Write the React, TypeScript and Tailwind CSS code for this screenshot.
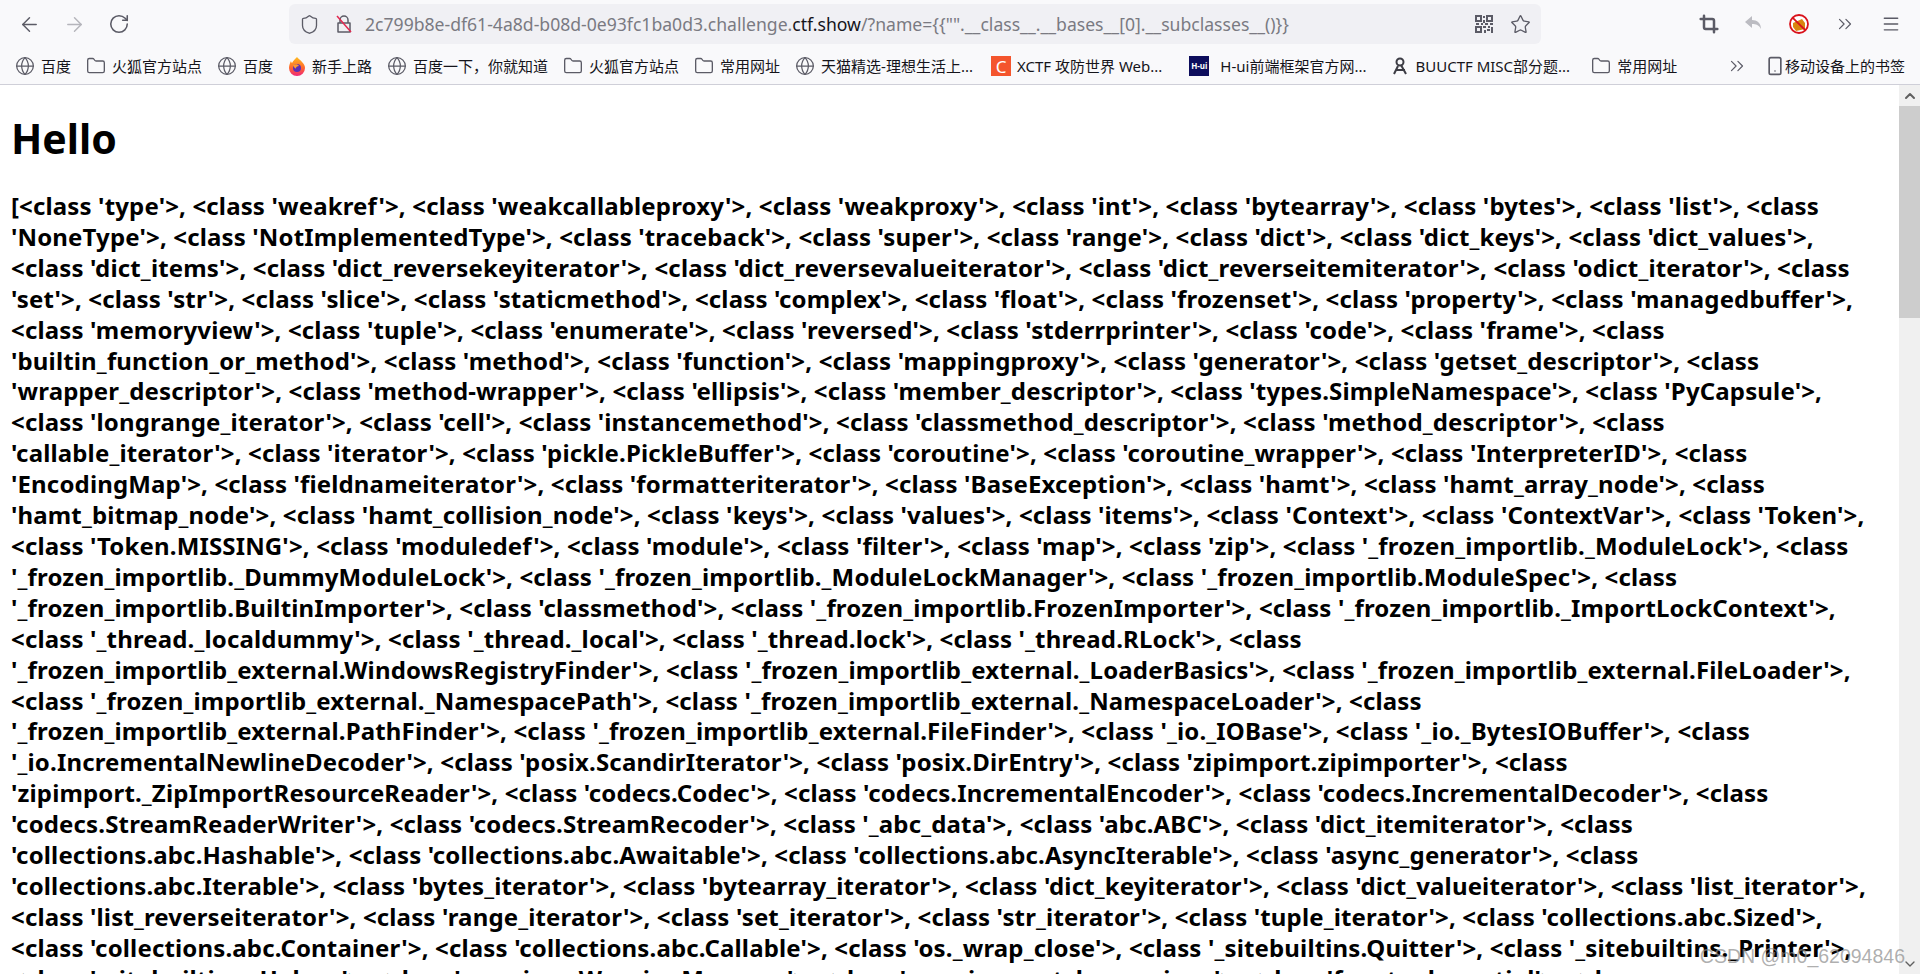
import { ArrowLeft, ArrowRight, RotateCw, Shield, Star, Globe, Folder, ChevronsRight, Menu, Crop, Smartphone, ChevronUp, ChevronDown } from "lucide-react";

const lines = [
  "[<class 'type'>, <class 'weakref'>, <class 'weakcallableproxy'>, <class 'weakproxy'>, <class 'int'>, <class 'bytearray'>, <class 'bytes'>, <class 'list'>, <class",
  "'NoneType'>, <class 'NotImplementedType'>, <class 'traceback'>, <class 'super'>, <class 'range'>, <class 'dict'>, <class 'dict_keys'>, <class 'dict_values'>,",
  "<class 'dict_items'>, <class 'dict_reversekeyiterator'>, <class 'dict_reversevalueiterator'>, <class 'dict_reverseitemiterator'>, <class 'odict_iterator'>, <class",
  "'set'>, <class 'str'>, <class 'slice'>, <class 'staticmethod'>, <class 'complex'>, <class 'float'>, <class 'frozenset'>, <class 'property'>, <class 'managedbuffer'>,",
  "<class 'memoryview'>, <class 'tuple'>, <class 'enumerate'>, <class 'reversed'>, <class 'stderrprinter'>, <class 'code'>, <class 'frame'>, <class",
  "'builtin_function_or_method'>, <class 'method'>, <class 'function'>, <class 'mappingproxy'>, <class 'generator'>, <class 'getset_descriptor'>, <class",
  "'wrapper_descriptor'>, <class 'method-wrapper'>, <class 'ellipsis'>, <class 'member_descriptor'>, <class 'types.SimpleNamespace'>, <class 'PyCapsule'>,",
  "<class 'longrange_iterator'>, <class 'cell'>, <class 'instancemethod'>, <class 'classmethod_descriptor'>, <class 'method_descriptor'>, <class",
  "'callable_iterator'>, <class 'iterator'>, <class 'pickle.PickleBuffer'>, <class 'coroutine'>, <class 'coroutine_wrapper'>, <class 'InterpreterID'>, <class",
  "'EncodingMap'>, <class 'fieldnameiterator'>, <class 'formatteriterator'>, <class 'BaseException'>, <class 'hamt'>, <class 'hamt_array_node'>, <class",
  "'hamt_bitmap_node'>, <class 'hamt_collision_node'>, <class 'keys'>, <class 'values'>, <class 'items'>, <class 'Context'>, <class 'ContextVar'>, <class 'Token'>,",
  "<class 'Token.MISSING'>, <class 'moduledef'>, <class 'module'>, <class 'filter'>, <class 'map'>, <class 'zip'>, <class '_frozen_importlib._ModuleLock'>, <class",
  "'_frozen_importlib._DummyModuleLock'>, <class '_frozen_importlib._ModuleLockManager'>, <class '_frozen_importlib.ModuleSpec'>, <class",
  "'_frozen_importlib.BuiltinImporter'>, <class 'classmethod'>, <class '_frozen_importlib.FrozenImporter'>, <class '_frozen_importlib._ImportLockContext'>,",
  "<class '_thread._localdummy'>, <class '_thread._local'>, <class '_thread.lock'>, <class '_thread.RLock'>, <class",
  "'_frozen_importlib_external.WindowsRegistryFinder'>, <class '_frozen_importlib_external._LoaderBasics'>, <class '_frozen_importlib_external.FileLoader'>,",
  "<class '_frozen_importlib_external._NamespacePath'>, <class '_frozen_importlib_external._NamespaceLoader'>, <class",
  "'_frozen_importlib_external.PathFinder'>, <class '_frozen_importlib_external.FileFinder'>, <class '_io._IOBase'>, <class '_io._BytesIOBuffer'>, <class",
  "'_io.IncrementalNewlineDecoder'>, <class 'posix.ScandirIterator'>, <class 'posix.DirEntry'>, <class 'zipimport.zipimporter'>, <class",
  "'zipimport._ZipImportResourceReader'>, <class 'codecs.Codec'>, <class 'codecs.IncrementalEncoder'>, <class 'codecs.IncrementalDecoder'>, <class",
  "'codecs.StreamReaderWriter'>, <class 'codecs.StreamRecoder'>, <class '_abc_data'>, <class 'abc.ABC'>, <class 'dict_itemiterator'>, <class",
  "'collections.abc.Hashable'>, <class 'collections.abc.Awaitable'>, <class 'collections.abc.AsyncIterable'>, <class 'async_generator'>, <class",
  "'collections.abc.Iterable'>, <class 'bytes_iterator'>, <class 'bytearray_iterator'>, <class 'dict_keyiterator'>, <class 'dict_valueiterator'>, <class 'list_iterator'>,",
  "<class 'list_reverseiterator'>, <class 'range_iterator'>, <class 'set_iterator'>, <class 'str_iterator'>, <class 'tuple_iterator'>, <class 'collections.abc.Sized'>,",
  "<class 'collections.abc.Container'>, <class 'collections.abc.Callable'>, <class 'os._wrap_close'>, <class '_sitebuiltins.Quitter'>, <class '_sitebuiltins._Printer'>,",
  "<class '_sitebuiltins._Helper'>, <class 'warnings.WarningMessage'>, <class 'warnings.catch_warnings'>, <class 'functools.partial'>, <class",
];

const bookmarks = [
  { icon: "globe", label: "百度", cls: "gap-[6px]" },
  { icon: "folder", label: "火狐官方站点", cls: "gap-[6px]" },
  { icon: "globe", label: "百度", cls: "gap-[6px]" },
  { icon: "firefox", label: "新手上路", cls: "gap-[6px]" },
  { icon: "globe", label: "百度一下，你就知道", cls: "gap-[6px]" },
  { icon: "folder", label: "火狐官方站点", cls: "gap-[6px]" },
  { icon: "folder", label: "常用网址", cls: "gap-[6px]" },
  { icon: "globe", label: "天猫精选-理想生活上...", cls: "gap-[6px]" },
  { icon: "xctf", label: "XCTF 攻防世界 Web...", cls: "ml-[3px] gap-[6px]" },
  { icon: "hui", label: "H-ui前端框架官方网...", cls: "ml-[12px] gap-[11px]" },
  { icon: "buu", label: "BUUCTF MISC部分题...", cls: "ml-[10px] gap-[6px]" },
  { icon: "folder", label: "常用网址", cls: "ml-[6px] gap-[6px]" },
];

function FirefoxIcon() {
  return (
    <svg width="18" height="20" viewBox="0 0 18 20">
      <defs>
        <linearGradient id="fx" x1="0" y1="0" x2="0" y2="1">
          <stop offset="0" stopColor="#ffbd1f" />
          <stop offset="0.55" stopColor="#ff6a2b" />
          <stop offset="1" stopColor="#f0257a" />
        </linearGradient>
      </defs>
      <path d="M9 1c1 2 4 3 5 5 2 2 3 4 3 6a8 8 0 0 1-16 0c0-3 1-5 2-7 0 1 1 2 1 2 1-2 3-4 5-6z" fill="url(#fx)" />
      <circle cx="9" cy="12" r="4" fill="#5b2fb4" />
      <path d="M5 9c2-1 5-1 6 1-2 0-3 1-3 2s-2 0-3-3z" fill="#ff9b2d" />
    </svg>
  );
}

function BuuIcon() {
  return (
    <svg width="18" height="20" viewBox="0 0 18 20" fill="none" stroke="#3c3c44" strokeWidth="2">
      <circle cx="9" cy="6" r="3.5" />
      <path d="M7 10 3 18M10 9l5 9M5 14h9" />
    </svg>
  );
}

function BookmarkIcon({ icon }: { icon: string }) {
  if (icon === "globe") return <Globe size={20} strokeWidth={1.5} className="text-[#5b5b66]" />;
  if (icon === "folder") return <Folder size={20} strokeWidth={1.6} className="text-[#5b5b66]" />;
  if (icon === "firefox") return <FirefoxIcon />;
  if (icon === "buu") return <BuuIcon />;
  if (icon === "xctf")
    return <span className="flex h-5 w-5 items-center justify-center bg-[#f4552d] text-[17px] leading-none text-white">C</span>;
  return <span className="flex h-5 w-5 items-center justify-center bg-[#0d0d5c] text-[8px] font-bold leading-none text-white">H-ui</span>;
}

function BlockedAddon() {
  return (
    <svg width="20" height="20" viewBox="0 0 20 20">
      <circle cx="10" cy="10" r="9" fill="#fff" />
      <path d="M4 9l9-4 3 4v6l-9 2-3-4z" fill="#d9860f" />
      <circle cx="10" cy="10" r="9" fill="none" stroke="#d9121b" strokeWidth="1.8" />
      <path d="M3.8 3.8 16.2 16.2" stroke="#d9121b" strokeWidth="1.8" />
    </svg>
  );
}

function BrokenLock() {
  return (
    <svg width="18" height="20" viewBox="0 0 18 20" fill="none">
      <path d="M5 9V6a4 4 0 0 1 8 0v3M3 9h12v9H3z" stroke="#5b5b66" strokeWidth="1.5" strokeLinejoin="round" />
      <path d="M2 2l14 16" stroke="#e22850" strokeWidth="1.5" />
    </svg>
  );
}

function QrIcon() {
  return (
    <svg width="18" height="18" viewBox="0 0 18 18" fill="#5b5b66">
      <path d="M0 0h7v7H0zM2 2v3h3V2zM11 0h7v7h-7zM13 2v3h3V2zM0 11h7v7H0zM2 13v3h3v-3z" fillRule="evenodd" />
      <path d="M8 1h2v2H8zM8 5h2v3H8zM1 8h3v2H1zM6 8h2v2H6zM10 8h3v2h-3zM15 8h3v2h-3zM8 11h3v2H8zM13 11h2v2h-2zM9 15h2v3H9zM12 14h3v2h-3zM16 12h2v6h-2z" />
    </svg>
  );
}

export default function App() {
  return (
    <div className="flex h-screen w-full flex-col overflow-hidden bg-white font-['Noto_Sans','Noto_Sans_CJK_SC',sans-serif]">
      <div className="h-[85px] shrink-0 border-b border-[#cfcfd8] bg-[#f9f9fb]">
        <div className="flex h-12 items-start">
          <div className="flex h-12 w-[289px] items-center gap-[22px] pl-[18px] text-[#5b5b66]">
            <ArrowLeft size={23} strokeWidth={1.5} />
            <ArrowRight size={23} strokeWidth={1.5} className="text-[#b5b5bb]" />
            <RotateCw size={22} strokeWidth={1.7} />
          </div>
          <div className="mt-1 flex h-10 w-[1252px] items-center rounded-md bg-[#f0f0f4] pl-[10px] pr-[10px]">
            <Shield size={21} strokeWidth={1.5} className="text-[#5b5b66]" />
            <span className="ml-[15px]"><BrokenLock /></span>
            <span className="ml-[12px] whitespace-nowrap text-[17.6px] text-[#7a7a82]">
              2c799b8e-df61-4a8d-b08d-0e93fc1ba0d3.challenge.<span className="text-[#15141a]">ctf.show</span>/?name={"{{\"\".__class__.__bases__[0].__subclasses__()}}"}
            </span>
            <div className="ml-auto flex items-center gap-[17px]">
              <QrIcon />
              <Star size={21} strokeWidth={1.5} className="text-[#5b5b66]" />
            </div>
          </div>
          <div className="flex h-12 flex-1 items-center justify-end gap-[25px] pr-[19px] text-[#5b5b66]">
            <Crop size={20} strokeWidth={3} />
            <svg width="20" height="18" viewBox="0 0 20 18" fill="#bcbcc2">
              <path d="M8 1 1 7l7 6V9c4 0 7 1 9 5 0-6-4-9-9-9z" />
            </svg>
            <BlockedAddon />
            <ChevronsRight size={22} strokeWidth={1.3} />
            <Menu size={20} strokeWidth={1.7} />
          </div>
        </div>
        <div className="flex h-9 items-center whitespace-nowrap pl-[15px] text-[15px] text-[#15141a]">
          <div className="flex items-center gap-[15px]">
            {bookmarks.map((b, i) => (
              <div key={i} className={"flex items-center " + b.cls}>
                <BookmarkIcon icon={b.icon} />
                <span>{b.label}</span>
              </div>
            ))}
          </div>
          <div className="ml-auto flex items-center pr-[15px]">
            <ChevronsRight size={22} strokeWidth={1.3} className="mr-[17px] text-[#5b5b66]" />
            <Smartphone size={20} strokeWidth={2} className="text-[#5b5b66]" />
            <span>移动设备上的书签</span>
          </div>
        </div>
      </div>
      <div className="relative flex min-h-0 flex-1">
        <main className="min-w-0 flex-1 overflow-hidden whitespace-nowrap pl-[11px] text-black">
          <h1 className="mt-[26px] text-[41px] font-bold leading-[54px]">Hello</h1>
          <div className="mt-[26px] text-[24px] font-bold leading-[30.9px] tracking-[0.15px]">
            {lines.map((line, i) => (
              <div key={i}>{line}</div>
            ))}
          </div>
        </main>
        <div className="flex w-[21px] shrink-0 flex-col bg-[#f0f0f0] text-[#606060]">
          <div className="flex h-[21px] items-center justify-center"><ChevronUp size={16} strokeWidth={3} /></div>
          <div className="h-[212px] bg-[#cdcdcd]" />
          <div className="mt-auto flex h-[21px] items-center justify-center"><ChevronDown size={16} strokeWidth={2} /></div>
        </div>
        <span className="absolute bottom-[8px] right-[15px] font-['Liberation_Sans',sans-serif] text-[19.5px] leading-none text-[#8c8c8c]/70">CSDN @m0_62094846</span>
      </div>
    </div>
  );
}
